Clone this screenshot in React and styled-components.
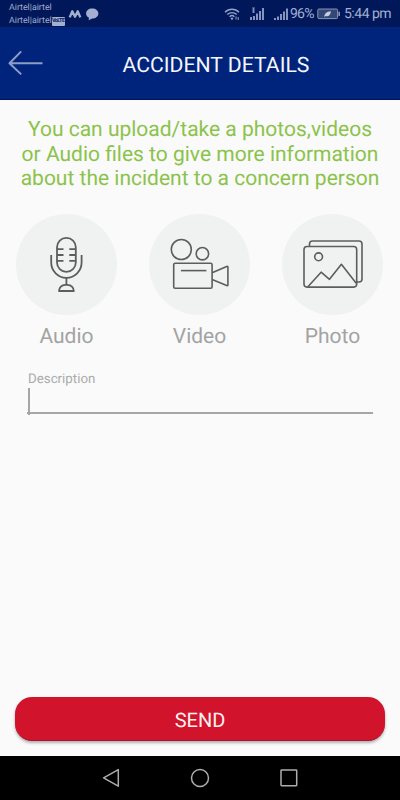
import React, { useState } from 'react';
import styled, { createGlobalStyle } from 'styled-components';

const AudioIcon = () => (
    <Drawing width="100" height="100" viewBox="0 0 100 100" $color="#5c5e5e" $stroke={1.8}>
        <rect x="41" y="23.8" width="18.8" height="34.1" rx="9.4" />
        <path d="M41 35.2h6.5M41 41h6.5M41 46.8h6.5M53.3 35.2h6.5M53.3 41h6.5M53.3 46.8h6.5" />
        <path d="M35.2 41v7.6a15.2 15.2 0 0 0 30.4 0v-7.6" />
        <path d="M50.4 63.8v7M43 77h14.8a6.2 6.2 0 0 0-6.2-6.2h-2.4a6.2 6.2 0 0 0-6.2 6.2z" />
    </Drawing>
);

const VideoIcon = () => (
    <Drawing width="100" height="100" viewBox="0 0 100 100" $color="#5c5e5e" $stroke={1.6}>
        <circle cx="32.3" cy="35.5" r="10" />
        <circle cx="53.4" cy="39.7" r="6.2" />
        <rect x="24.7" y="49.2" width="38.4" height="25" rx="1.5" />
        <path d="M31.9 56.6h25.5" />
        <path d="M63.1 58.8l14.6-6.4q1.2-.4 1.2.8v17.6q0 1.2-1.2.8l-14.6-6.1" />
    </Drawing>
);

const PhotoIcon = () => (
    <Drawing width="100" height="100" viewBox="0 0 100 100" $color="#5c5e5e" $stroke={1.6}>
        <rect x="22" y="32.5" width="52.7" height="40.6" rx="3" />
        <path d="M27.5 32v-2a3 3 0 0 1 3-3h46.5a3 3 0 0 1 3 3v35a3 3 0 0 1-3 3h-2" />
        <circle cx="36.6" cy="42.8" r="3.9" />
        <path d="M25.9 72.8l13.2-14.6 8.4 7.1 11.9-15 14.8 19" />
    </Drawing>
);

const mediaList = [
    { id: 'audio', name: 'Audio', Icon: AudioIcon },
    { id: 'video', name: 'Video', Icon: VideoIcon },
    { id: 'photo', name: 'Photo', Icon: PhotoIcon },
];

const StatusBar = () => (
    <StatusStyle>
        <Carriers>
            <div>Airtel|airtel</div>
            <div className="line">
                Airtel|airtel <span className="volte">VoLTE</span>
            </div>
        </Carriers>
        <Drawing className="apps" width="32" height="14" viewBox="0 0 32 14" $color="#a3aed1" $stroke={2.3}>
            <path d="M1.7 10.4l2.6-6.2 2.7 5.6 2.7-5.6 2.6 6.2" />
            <path d="M24.2 1.5c3.6 0 6.2 2.1 6.2 5s-2.6 5-6.2 5l-3.6 1.8.4-2.6c-1.9-.9-2.9-2.4-2.9-4.2 0-2.9 2.5-5 6.1-5z" fill="#a3aed1" stroke="none" />
        </Drawing>
        <Drawing className="wifi" width="16" height="14" viewBox="0 0 16 14" $color="#94a1c9" $stroke={1.4}>
            <path d="M1 5.2c3.8-4 10.2-4 14 0M3.3 7.6c2.6-2.6 6.8-2.6 9.4 0M5.6 9.8c1.4-1.4 3.4-1.4 4.8 0" />
            <circle cx="8" cy="11.6" r="1.2" fill="#94a1c9" stroke="none" />
            <path d="M12 9.5v3M14.2 10v3" strokeWidth="1" />
        </Drawing>
        <Drawing className="signal" width="14" height="14" viewBox="0 0 14 14" $color="#94a1c9" $stroke={1.8}>
            <path d="M1 10v3M4 9v4M7 6.5v6.5M10 4v9M13 1v12" />
            <path d="M2 1h3M2 3h3M2 5h3M3.5 1v5" strokeWidth=".8" />
        </Drawing>
        <Drawing className="signal" width="14" height="14" viewBox="0 0 14 14" $color="#94a1c9" $stroke={1.8}>
            <path d="M1 11v2M4 9.5v3.5M7 7v6M10 4.5v8.5M13 1.5v11.5" />
        </Drawing>
        <span className="percent">96%</span>
        <Drawing className="battery" width="24" height="12" viewBox="0 0 24 12" $color="#8793b5" $stroke={1}>
            <rect x=".8" y="1" width="19.8" height="9.6" rx="1.2" fill="#344878" />
            <path d="M22.2 3.7v4.2" strokeWidth="1.6" />
            <path d="M7.3 9c.1-3.3 2.3-5.6 6.6-5.8-.2 3.7-2.5 5.6-5.2 4.8z" fill="#c5cde0" stroke="none" />
        </Drawing>
        <span className="time">5:44 pm</span>
    </StatusStyle>
);

const App = () => {

    const [description, setDescription] = useState('');

    return (
        <>
        <GlobalStyle />
        <Screen>
            <StatusBar />
            <Header>
                <BackButton aria-label="Back">
                    <Drawing width="36" height="28" viewBox="0 0 36 28" $color="#8e9dc6" $stroke={2}>
                        <path d="M34.5 14.2H1.5M13.2 2.4L1.5 14.2l11.7 11.2" />
                    </Drawing>
                </BackButton>
                <h1>ACCIDENT DETAILS</h1>
            </Header>
            <Content>
                <Notice>
                    <div>You can upload/take a photos,videos</div>
                    <div>or Audio files to give more information</div>
                    <div>about the incident to a concern person</div>
                </Notice>
                <MediaRow>
                    {mediaList.map(({ id, name, Icon }) => (
                        <MediaButton key={id}>
                            <div className="circle"><Icon /></div>
                            <div className="name">{name}</div>
                        </MediaButton>
                    ))}
                </MediaRow>
                <Field>
                    <label htmlFor="description">Description</label>
                    <div className="entry">
                        <Cursor />
                        <input id="description" value={description} onChange={(e) => setDescription(e.target.value)} />
                    </div>
                </Field>
                <SendButton>SEND</SendButton>
            </Content>
            <NavBar>
                <Drawing width="20" height="20" viewBox="0 0 20 20" $color="#adadad" $stroke={1.5}>
                    <path d="M17.3 1.6v16.6L2.6 9.9z" />
                </Drawing>
                <Drawing width="20" height="20" viewBox="0 0 20 20" $color="#adadad" $stroke={1.5}>
                    <circle cx="10" cy="10" r="8.5" />
                </Drawing>
                <Drawing width="20" height="20" viewBox="0 0 20 20" $color="#adadad" $stroke={1.5}>
                    <rect x="2" y="2" width="15.7" height="15.7" rx=".6" />
                </Drawing>
            </NavBar>
        </Screen>
        </>
    );
};

export default App;

const GlobalStyle = createGlobalStyle`
    * {
        box-sizing: border-box;
    }
    body {
        margin: 0;
        background: #fafafa;
        font-family: Roboto, "Liberation Sans", sans-serif;
        text-rendering: geometricPrecision;
    }
    button {
        padding: 0;
        border: none;
        background: none;
        font-family: inherit;
        text-rendering: inherit;
    }
`;

const Drawing = styled.svg`
    display: block;
    flex-shrink: 0;
    fill: none;
    stroke: ${(props) => props.$color};
    stroke-width: ${(props) => props.$stroke}px;
    stroke-linejoin: round;
`;

const Screen = styled.div`
    width: 400px;
    height: 800px;
    display: flex;
    flex-direction: column;
    overflow: hidden;
`;

const StatusStyle = styled.div`
    height: 27px;
    display: flex;
    align-items: center;
    padding: 1px 9px 0;
    background: #00185a;
    color: #a3aed1;
    font-size: 14px;
    white-space: nowrap;
    .apps{
        margin-left: 3px;
    }
    .wifi{
        margin-left: auto;
    }
    .signal{
        margin-left: 10px;
    }
    .percent{
        width: 25px;
        margin-left: 2px;
        letter-spacing: -0.8px;
    }
    .battery{
        margin: 0 3px 0 2px;
    }
    .time{
        width: 47px;
        letter-spacing: -0.5px;
    }
`;

const Carriers = styled.div`
    margin-top: 1px;
    font-size: 8.8px;
    line-height: 13px;
    .line{
        display: flex;
        align-items: center;
    }
    .volte{
        width: 13px;
        height: 9px;
        border-radius: 1px;
        background: #a3aed1;
        color: #00185a;
        font-size: 5.5px;
        font-weight: bold;
        line-height: 9px;
        letter-spacing: -0.6px;
        text-align: center;
    }
`;

const Header = styled.div`
    height: 73px;
    display: grid;
    grid-template-columns: 60px 1fr;
    align-items: center;
    padding: 0 35px 0 8px;
    background: #00247c;
    border-bottom: 1px solid #001560;
    h1{
        margin: 4px 0 0 -1px;
        color: #f4f6fb;
        font-size: 21.2px;
        font-weight: normal;
        text-align: center;
        white-space: nowrap;
    }
`;

const BackButton = styled.button`
    width: 36px;
    height: 28px;
`;

const Content = styled.div`
    flex: 1;
    display: flex;
    flex-direction: column;
    padding: 18px 15px 15px;
    background: #fafafa;
`;

const Notice = styled.div`
    color: #8bc34a;
    font-size: 21px;
    line-height: 24.5px;
    text-align: center;
    white-space: nowrap;
`;

const MediaRow = styled.div`
    display: flex;
    justify-content: space-between;
    margin: 22px 2px 0 1px;
`;

const MediaButton = styled.button`
    width: 101px;
    .circle{
        width: 101px;
        height: 101px;
        border-radius: 50%;
        background: #f0f2f2;
    }
    .name{
        margin-top: 10px;
        color: #a3a3a3;
        font-size: 21px;
        line-height: 25px;
    }
`;

const Field = styled.div`
    display: flex;
    flex-direction: column;
    margin: 22px 12px 0 12px;
    label{
        padding-left: 1px;
        color: #ababab;
        font-size: 13.3px;
        line-height: 16px;
    }
    .entry{
        display: flex;
        height: 26px;
        border-bottom: 2px solid #a6a6a6;
    }
    input{
        flex: 1;
        min-width: 0;
        height: 24px;
        border: none;
        outline: none;
        background: none;
        color: #555;
        font-size: 18px;
    }
`;

const Cursor = styled.div`
    width: 2px;
    height: 27px;
    margin-left: 1px;
    background: #a6a6a6;
`;

const SendButton = styled.button`
    height: 44px;
    margin-top: auto;
    padding-top: 3px;
    border-radius: 17px;
    background: #d1142b;
    border-bottom: 1px solid #a8152a;
    box-shadow: 0 2px 3px rgba(0, 0, 0, 0.3);
    color: #fff0f2;
    font-size: 20px;
`;

const NavBar = styled.div`
    height: 44px;
    display: flex;
    justify-content: center;
    align-items: center;
    gap: 69px;
    background: #000;
`;
